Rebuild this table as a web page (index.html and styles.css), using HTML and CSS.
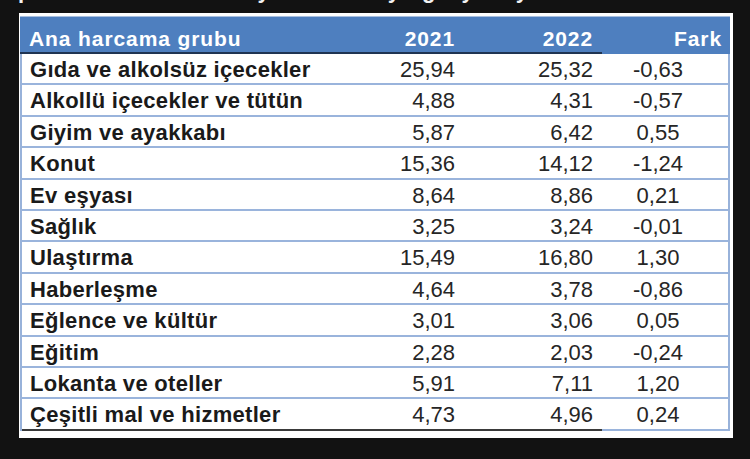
FILE: index.html
```html
<!DOCTYPE html>
<html lang="tr">
<head>
<meta charset="utf-8">
<title>Ana harcama grubu</title>
<link rel="stylesheet" href="styles.css">
</head>
<body>
<div class="top">
  <div class="frag">
    <span class="s s1"></span><span>p</span>
    <span class="s s2"></span><span>y</span>
    <span class="s s3"></span><span>y</span>
    <span class="s s4"></span><span>g</span>
    <span class="s s5"></span><span>y</span>
    <span class="s s6"></span><span>y</span>
  </div>
</div>
<div class="panel">
  <div class="head">
    <div class="hc name">Ana harcama grubu</div>
    <div class="hc num">2021</div>
    <div class="hc num n3">2022</div>
    <div class="hc fark">Fark</div>
  </div>
  <div class="body">
    <div class="row"><div class="c name">Gıda ve alkolsüz içecekler</div><div class="c num">25,94</div><div class="c num n3">25,32</div><div class="c diff">-0,63</div></div>
    <div class="row"><div class="c name">Alkollü içecekler ve tütün</div><div class="c num">4,88</div><div class="c num n3">4,31</div><div class="c diff">-0,57</div></div>
    <div class="row"><div class="c name">Giyim ve ayakkabı</div><div class="c num">5,87</div><div class="c num n3">6,42</div><div class="c diff">0,55</div></div>
    <div class="row"><div class="c name">Konut</div><div class="c num">15,36</div><div class="c num n3">14,12</div><div class="c diff">-1,24</div></div>
    <div class="row"><div class="c name">Ev eşyası</div><div class="c num">8,64</div><div class="c num n3">8,86</div><div class="c diff">0,21</div></div>
    <div class="row"><div class="c name">Sağlık</div><div class="c num">3,25</div><div class="c num n3">3,24</div><div class="c diff">-0,01</div></div>
    <div class="row"><div class="c name">Ulaştırma</div><div class="c num">15,49</div><div class="c num n3">16,80</div><div class="c diff">1,30</div></div>
    <div class="row"><div class="c name">Haberleşme</div><div class="c num">4,64</div><div class="c num n3">3,78</div><div class="c diff">-0,86</div></div>
    <div class="row"><div class="c name">Eğlence ve kültür</div><div class="c num">3,01</div><div class="c num n3">3,06</div><div class="c diff">0,05</div></div>
    <div class="row"><div class="c name">Eğitim</div><div class="c num">2,28</div><div class="c num n3">2,03</div><div class="c diff">-0,24</div></div>
    <div class="row"><div class="c name">Lokanta ve oteller</div><div class="c num">5,91</div><div class="c num n3">7,11</div><div class="c diff">1,20</div></div>
    <div class="row last"><div class="c name">Çeşitli mal ve hizmetler</div><div class="c num">4,73</div><div class="c num n3">4,96</div><div class="c diff">0,24</div></div>
  </div>
</div>
</body>
</html>
```
FILE: styles.css
```css
html, body {
  margin: 0;
  padding: 0;
  background: #121212;
  width: 750px;
  height: 459px;
  overflow: hidden;
  font-family: "Liberation Sans", Arial, sans-serif;
}

.top {
  height: 13px;
  overflow: hidden;
}

.frag {
  display: flex;
  color: #f2f2f2;
  font-size: 22px;
  font-weight: bold;
  line-height: 22px;
  margin-top: -20px;
}

.s { display: inline-block; }
.s1 { width: 18px; }
.s2 { width: 226px; }
.s3 { width: 118px; }
.s4 { width: 22px; }
.s5 { width: 26px; }
.s6 { width: 42px; }

.panel {
  margin-left: 19px;
  width: 714px;
  box-sizing: border-box;
  background: #ffffff;
  padding: 4px 3px 7px 1px;
}

.head {
  display: grid;
  grid-template-columns: 320px 119px 143px 128px;
  background: #4e7fbf;
  box-shadow: 0 -1px 0 #a9c0e0;
}

.hc {
  height: 37px;
  box-sizing: border-box;
  padding-top: 9px;
  line-height: 25px;
  color: #ffffff;
  font-size: 21px;
  font-weight: bold;
  letter-spacing: 0.9px;
  border-bottom: 2px solid #1f3452;
  white-space: nowrap;
}

.hc.name { padding-left: 9px; }
.hc.num { text-align: right; padding-right: 4px; }
.hc.num.n3 { padding-right: 9px; }
.hc.fark {
  text-align: right;
  padding-right: 8px;
  border-bottom-color: #4e7fbf;
}

.body {
  border-left: 2px solid #98b2da;
  border-right: 2px solid #98b2da;
}

.row {
  display: grid;
  grid-template-columns: 318px 119px 143px 126px;
}

.c {
  height: 31.4px;
  box-sizing: border-box;
  padding-top: 3px;
  line-height: 26.4px;
  font-size: 22px;
  color: #262626;
  border-bottom: 2px solid #9ab4dc;
  white-space: nowrap;
}

.c.name {
  padding-left: 8px;
  font-weight: bold;
  color: #1a1a1a;
  letter-spacing: 0.3px;
}

.c.num { text-align: right; padding-right: 4px; }
.c.num.n3 { padding-right: 9px; }
.c.diff { text-align: center; padding-right: 14px; }

.row.last .c { border-bottom-color: #3a3a3a; }
.row.last .c.diff { border-bottom-color: #9ab4dc; }
```
